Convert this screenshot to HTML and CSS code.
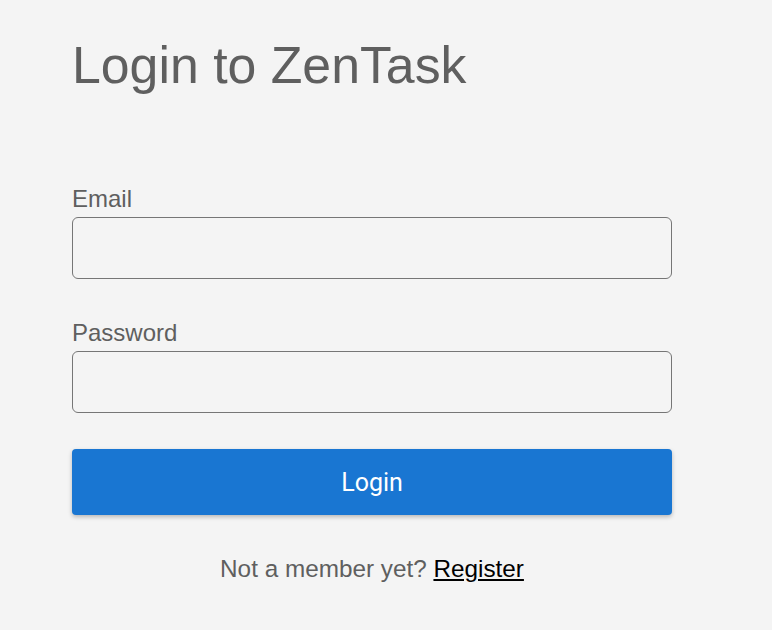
FILE: index.html
```html
<!DOCTYPE html>
<html lang="en">
<head>
<meta charset="utf-8">
<title>Login to ZenTask</title>
<link rel="stylesheet" href="styles.css">
</head>
<body>
<main class="page">
  <h1 class="title">Login to ZenTask</h1>
  <form class="form">
    <div class="field">
      <label class="label" for="email">Email</label>
      <input class="input" id="email" type="email">
    </div>
    <div class="field">
      <label class="label" for="password">Password</label>
      <input class="input" id="password" type="password">
    </div>
    <button class="button" type="button">Login</button>
  </form>
  <p class="footer">Not a member yet? <a class="link" href="#">Register</a></p>
</main>
</body>
</html>
```
FILE: styles.css
```css
html, body {
  margin: 0;
  padding: 0;
  background: #f4f4f4;
}
body {
  font-family: "Liberation Sans", Arial, sans-serif;
  color: #5f5f5f;
}
.page {
  width: 600px;
  padding: 35px 0 0 72px;
}
.title {
  margin: 0;
  font-size: 51.8px;
  font-weight: 400;
  line-height: normal;
  color: #5f5f5f;
}
.form {
  margin-top: 90px;
  display: flex;
  flex-direction: column;
}
.field {
  display: flex;
  flex-direction: column;
  gap: 4px;
}
.field + .field {
  margin-top: 40px;
}
.label {
  font-size: 24px;
  line-height: normal;
}
.input {
  box-sizing: border-box;
  height: 62px;
  width: 100%;
  margin: 0;
  border: 1px solid #767676;
  border-radius: 6px;
  background: #f4f4f4;
  font-size: 20px;
  padding: 0 12px;
}
.button {
  height: 66px;
  width: 100%;
  margin-top: 36px;
  border: none;
  border-radius: 4px;
  background: #1976d2;
  color: #ffffff;
  font-family: Roboto, sans-serif;
  font-size: 25px;
  box-shadow: 0 2px 4px rgba(0, 0, 0, 0.25);
}
.footer {
  margin: 40px 0 0;
  text-align: center;
  font-size: 24.3px;
  line-height: normal;
}
.link {
  color: #000000;
  text-decoration: underline;
}
```
